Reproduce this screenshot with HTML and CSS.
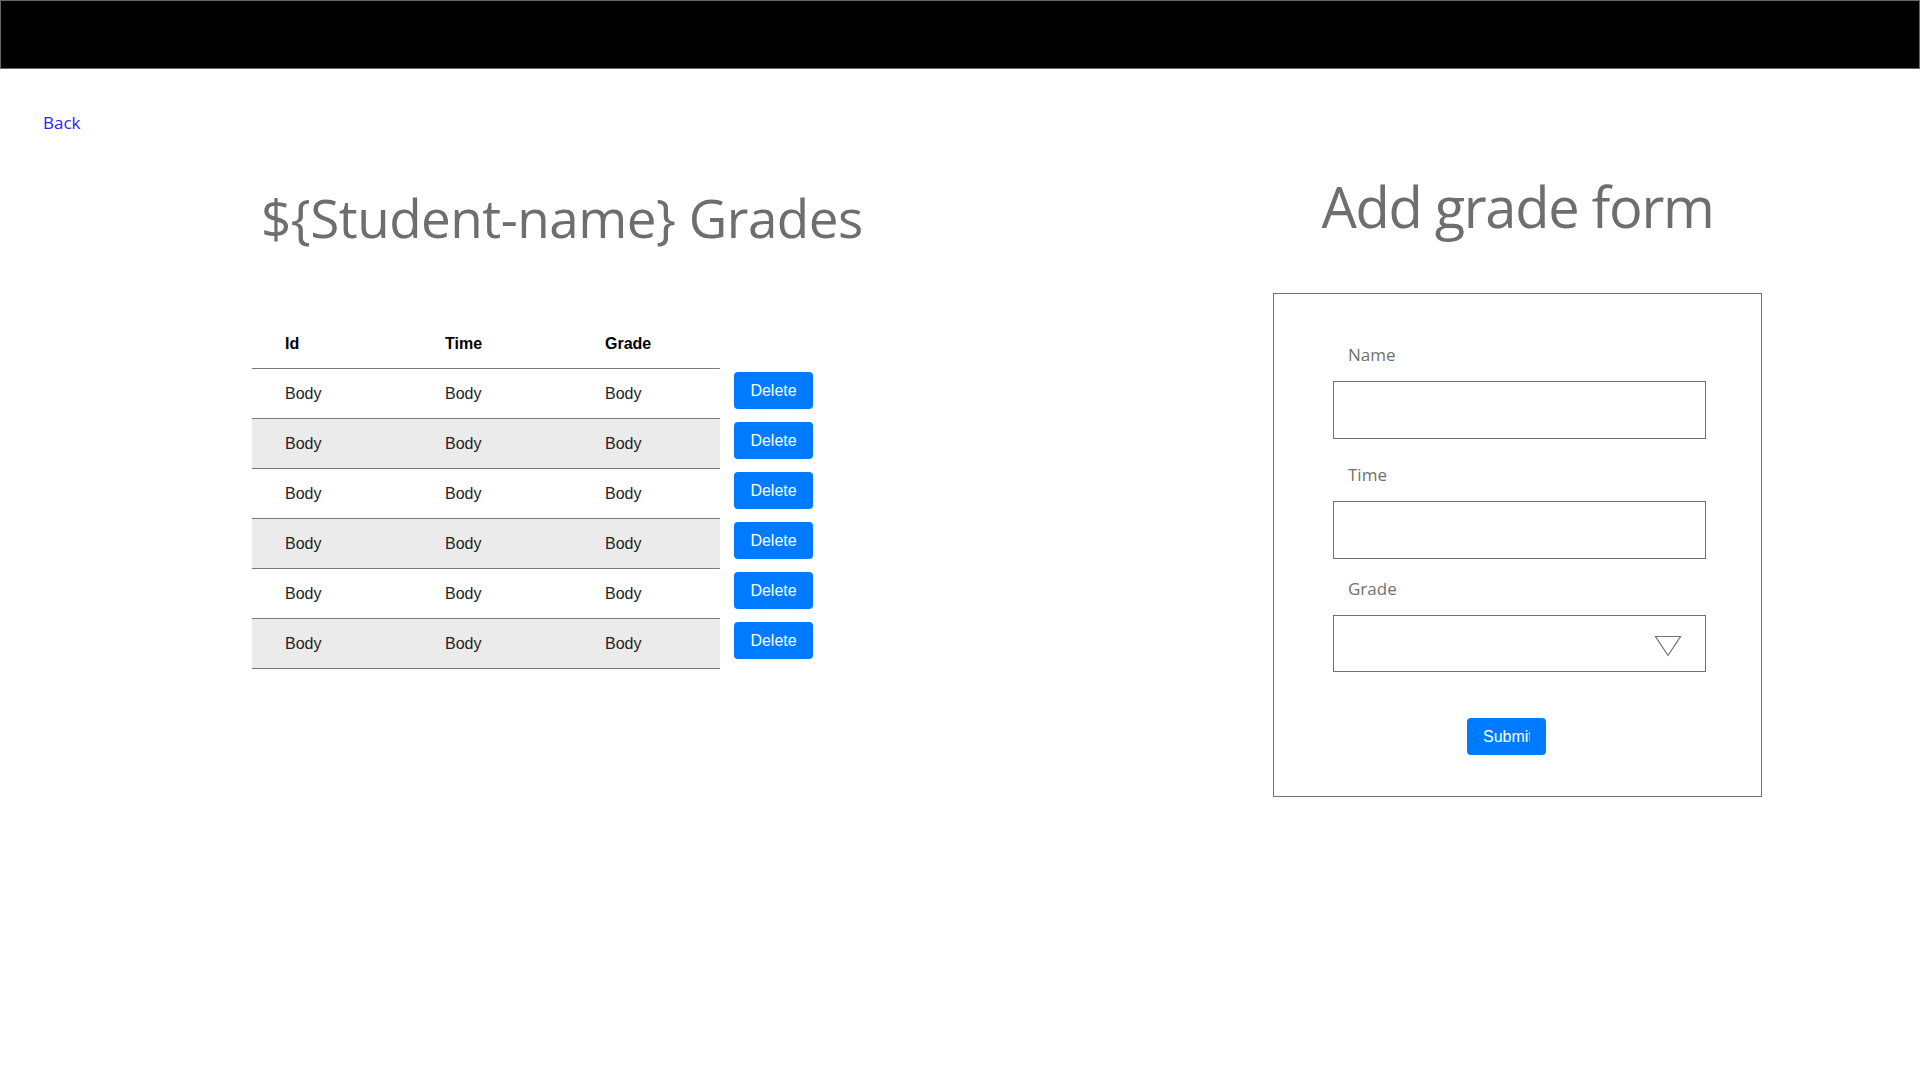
FILE: index.html
```html
<!DOCTYPE html>
<html lang="en">
<head>
<meta charset="utf-8">
<title>Grades</title>
<link rel="stylesheet" href="styles.css">
</head>
<body>
<header class="topbar"></header>
<div class="back-row"><a class="back" href="#">Back</a></div>
<main class="main">
  <section class="grades">
    <h1 class="grades-title">${Student-name} Grades</h1>
    <div class="table">
      <div class="row head"><div class="cells"><span class="cell">Id</span><span class="cell">Time</span><span class="cell">Grade</span></div></div>
      <div class="row"><div class="cells"><span class="cell">Body</span><span class="cell">Body</span><span class="cell">Body</span></div><button class="btn delete" type="button">Delete</button></div>
      <div class="row alt"><div class="cells"><span class="cell">Body</span><span class="cell">Body</span><span class="cell">Body</span></div><button class="btn delete" type="button">Delete</button></div>
      <div class="row"><div class="cells"><span class="cell">Body</span><span class="cell">Body</span><span class="cell">Body</span></div><button class="btn delete" type="button">Delete</button></div>
      <div class="row alt"><div class="cells"><span class="cell">Body</span><span class="cell">Body</span><span class="cell">Body</span></div><button class="btn delete" type="button">Delete</button></div>
      <div class="row"><div class="cells"><span class="cell">Body</span><span class="cell">Body</span><span class="cell">Body</span></div><button class="btn delete" type="button">Delete</button></div>
      <div class="row alt"><div class="cells"><span class="cell">Body</span><span class="cell">Body</span><span class="cell">Body</span></div><button class="btn delete" type="button">Delete</button></div>
    </div>
  </section>
  <section class="add">
    <h2 class="add-title">Add grade form</h2>
    <form class="form-box">
      <div class="field first">
        <label class="label">Name</label>
        <div class="input"></div>
      </div>
      <div class="field second">
        <label class="label">Time</label>
        <div class="input"></div>
      </div>
      <div class="field third">
        <label class="label">Grade</label>
        <div class="input select">
          <svg class="caret" width="28" height="22" viewBox="0 0 28 22"><polygon points="1.5,1.5 26.5,1.5 14,20.5" fill="none" stroke="#707070" stroke-width="1.2"/></svg>
        </div>
      </div>
      <button class="btn submit" type="button"><span class="clip">Submit</span></button>
    </form>
  </section>
</main>
</body>
</html>
```

FILE: styles.css
```css
html, body {
  margin: 0;
  padding: 0;
  background: #ffffff;
}

body {
  font-family: "Open Sans", "Noto Sans", sans-serif;
  width: 1920px;
  height: 1080px;
  overflow: hidden;
}

.topbar {
  height: 67px;
  background: #000000;
  border: 1px solid #666666;
}

.back-row {
  margin-top: 42px;
  padding-left: 43px;
  height: 24px;
  line-height: 24px;
}

.back {
  font-size: 17px;
  color: #3320f2;
  text-decoration: none;
}

.main {
  display: flex;
  align-items: flex-start;
  padding-left: 252px;
  margin-top: -1px;
}

.grades {
  flex: 1;
}

.grades-title {
  margin: 52px 0 68px 0;
  padding-left: 9px;
  font-size: 53px;
  line-height: 64px;
  font-weight: 400;
  letter-spacing: -0.5px;
  color: #6e6e6e;
}

.table {
  display: flex;
  flex-direction: column;
}

.row {
  display: flex;
  align-items: flex-start;
}

.cells {
  display: grid;
  grid-template-columns: 160px 160px 148px;
  width: 468px;
  height: 49px;
  border-bottom: 1px solid #7a7a7a;
  font-family: "Liberation Sans", Arial, sans-serif;
  font-size: 16px;
  color: #222222;
}

.row.head .cells {
  height: 50px;
  font-weight: 700;
  color: #000000;
}

.row.alt .cells {
  background: #ebebeb;
}

.cell {
  display: flex;
  align-items: center;
  padding-left: 33px;
}

.row.head .cell {
  padding-top: 1px;
}

.btn {
  box-sizing: border-box;
  width: 79px;
  height: 37px;
  border: none;
  border-radius: 4px;
  background: #007bff;
  color: #ffffff;
  font-family: "Liberation Sans", Arial, sans-serif;
  font-size: 16px;
  line-height: 37px;
  padding: 0;
}

.delete {
  margin: 3px 0 0 14px;
  text-align: center;
}

.add {
  width: 489px;
  margin-right: 158px;
}

.add-title {
  margin: 40px 0 55px 0;
  font-size: 56px;
  line-height: 64px;
  font-weight: 400;
  letter-spacing: -1.3px;
  text-align: center;
  color: #6e6e6e;
}

.form-box {
  box-sizing: border-box;
  width: 489px;
  height: 504px;
  border: 1px solid #707070;
  padding: 49px 0 0 59px;
  display: flex;
  flex-direction: column;
  align-items: flex-start;
}

.field {
  display: flex;
  flex-direction: column;
}

.field.second {
  margin-top: 24px;
}

.field.third {
  margin-top: 18px;
}

.label {
  font-size: 17px;
  line-height: 24px;
  color: #707070;
  padding-left: 15px;
  margin-bottom: 14px;
}

.input {
  box-sizing: border-box;
  width: 373px;
  height: 58px;
  border: 1px solid #707070;
}

.select {
  height: 57px;
  display: flex;
  align-items: center;
  justify-content: flex-end;
  padding-right: 23px;
  padding-top: 4px;
}

.caret {
  display: block;
}

.submit {
  margin: 46px 0 0 134px;
  padding: 0 15px 0 16px;
  text-align: left;
}

.clip {
  display: block;
  width: 47px;
  overflow: hidden;
  white-space: nowrap;
}
```
